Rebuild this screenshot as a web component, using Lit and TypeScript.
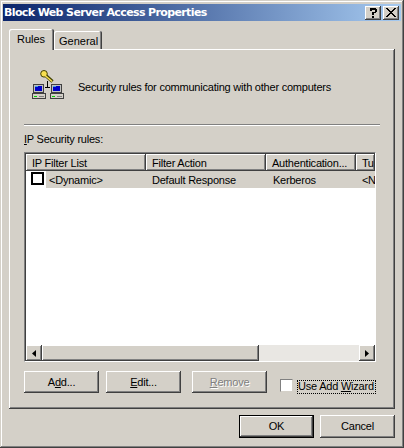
import { LitElement, html, svg, css } from "lit";
import { customElement } from "lit/decorators.js";

const pc = svg`
  <path d="M1 14h11v9H1z" fill="#404040"/><path d="M2 15h9v7H2z" fill="#c0c0c0"/><path d="M3 16h7v5H3z" fill="#0000c8"/><path d="M3 16h3v1H3z" fill="#40a0e0"/>
  <path d="M0 23h14v6H0z" fill="#404040"/><path d="M1 24h12v4H1z" fill="#d4d0c8"/><path d="M2 26h3v1H2z" fill="#00d000"/><path d="M7 26h5v1H7z" fill="#808080"/>
`;

@customElement("app-root")
export class AppRoot extends LitElement {
  static styles = css`
    :host { display: block; width: 404px; height: 448px; overflow: hidden; font: 11px/14px "Liberation Sans", Arial, sans-serif; letter-spacing: -0.22px; color: #000; }
    * { box-sizing: border-box; }
    u { text-decoration: underline; text-underline-offset: 1px; }
    .win { width: 404px; height: 448px; background: #d4d0c8; padding: 4px 3px 3px; box-shadow: inset -1px -1px #404040, inset 1px 1px #d4d0c8, inset -2px -2px #808080, inset 2px 2px #fff; display: flex; flex-direction: column; }
    .title { height: 17px; flex: none; display: flex; align-items: center; padding: 0 2px 0 1px; background: linear-gradient(90deg, #0a246a, #a6caf0); }
    .title b { flex: 1; color: #fff; font: bold 11px/17px "DejaVu Sans", sans-serif; letter-spacing: -0.62px; }
    .cap { width: 16px; height: 14px; display: flex; align-items: center; justify-content: center; padding: 0; }
    .cap + .cap { margin-left: 2px; }
    .bevel { background: #d4d0c8; box-shadow: inset -1px -1px #404040, inset 1px 1px #fff, inset -2px -2px #808080; }
    .body { flex: 1; padding: 8px 6px 0; display: flex; flex-direction: column; }
    .tabs { display: flex; height: 20px; align-items: flex-end; position: relative; z-index: 1; }
    .tab { height: 18px; width: 48px; padding: 3px 0 0 5px; background: #d4d0c8; border-radius: 2px 2px 0 0; box-shadow: inset -1px 0 #404040, inset 1px 1px #fff, inset -2px 0 #808080; letter-spacing: 0; }
    .tab.on { height: 21px; width: 45px; margin-bottom: -1px; padding: 3px 0 0 8px; }
    .panel { width: 386px; height: 360px; flex: none; padding: 21px 15px 0; background: #d4d0c8; box-shadow: inset -1px -1px #404040, inset 1px 1px #fff, inset -2px -2px #808080; display: flex; flex-direction: column; }
    .head { display: flex; align-items: center; height: 31px; padding-left: 8px; gap: 14px; flex: none; }
    .head svg { display: block; flex: none; }
    .head span { padding-top: 2px; }
    .sep { flex: none; width: 356px; height: 2px; margin-top: 23px; background: linear-gradient(#808080 50%, #fff 50%); }
    .lbl { margin-top: 6px; height: 14px; flex: none; }
    .list { flex: none; margin-top: 6px; width: 352px; height: 210px; display: flex; flex-direction: column; background: #fff; border: 1px solid; border-color: #808080 #fff #fff #808080; box-shadow: inset 1px 1px #404040; padding: 1px 0 0 1px; }
    .hdr { display: flex; height: 17px; flex: none; overflow: hidden; }
    .hc { flex: none; padding: 2px 0 0 6px; white-space: nowrap; overflow: hidden; }
    .c1 { width: 120px; } .c2 { width: 120px; } .c3 { width: 90px; } .c4 { min-width: 0; overflow: hidden; white-space: nowrap; }
    .row { display: flex; height: 17px; flex: none; overflow: hidden; }
    .first { display: flex; width: 120px; flex: none; }
    .ck { width: 13px; height: 13px; margin: 1px 2px 0 5px; flex: none; background: #fff; border: 2px solid #000; }
    .rc { background: #d4d0c8; padding: 2px 0 0 6px; flex: none; white-space: nowrap; }
    .rc.c3 { padding-left: 7px; }
    .first .rc { flex: 1; padding-left: 3px; }
    .hc.c4, .rc.c4 { flex: 1; padding-left: 6px; letter-spacing: -0.5px; }
    .fill { flex: 1; }
    .sb { display: flex; height: 16px; flex: none; }
    .sbtn { width: 16px; flex: none; display: flex; align-items: center; justify-content: center; }
    .thumb { width: 217px; flex: none; }
    .track { flex: 1; background: #e9e7e3; }
    .btns { display: flex; flex: none; margin-top: 9px; height: 22px; align-items: flex-start; }
    .btn { width: 75px; height: 22px; display: flex; align-items: center; justify-content: center; flex: none; }
    .dis { color: #808080; text-shadow: 1px 1px 0 #fff; }
    .e { margin-left: 7px; } .r { margin-left: 11px; }
    .cb { width: 13px; height: 13px; margin: 8px 4px 0 13px; flex: none; background: #fff; border: 1px solid; border-color: #808080 #d4d0c8 #d4d0c8 #808080; }
    .foc { margin-top: 9px; height: 14px; width: 79px; flex: none; outline: 1px dotted #000; outline-offset: -1px; padding-left: 1px; white-space: nowrap; line-height: 12px; }
    .foot { display: flex; justify-content: flex-end; gap: 6px; margin-top: 6px; flex: none; }
    .foot .btn { height: 23px; padding-bottom: 1px; }
    .def { box-shadow: inset 0 0 0 1px #000, inset -2px -2px #404040, inset 2px 2px #fff, inset -3px -3px #808080; }
  `;

  render() {
    return html`<div class="win">
      <div class="title">
        <b>Block Web Server Access Properties</b>
        <div class="cap bevel"><svg width="8" height="10" viewBox="0 0 8 10" shape-rendering="crispEdges"><path d="M1 0h6v1h1v3H7v1H5v2H3V4h3V2H3v1H1zM3 8h2v2H3z"/></svg></div>
        <div class="cap bevel"><svg width="10" height="9" viewBox="0 0 10 9" shape-rendering="crispEdges"><path d="M0 0h2v1h1v1h1v1h2V2h1V1h1V0h2v1H9v1H8v1H7v1H6v1h1v1h1v1h1v1h1v1H8V8H7V7H6V6H4v1H3v1H2v1H0V8h1V7h1V6h1V5h1V4H3V3H2V2H1V1H0z"/></svg></div>
      </div>
      <div class="body">
        <div class="tabs">
          <div class="tab on">Rules</div>
          <div class="tab">General</div>
        </div>
        <div class="panel">
          <div class="head">
            <svg width="32" height="31" viewBox="0 0 32 31" shape-rendering="crispEdges">
              <path d="M15.5 11v7M13 17.5h5" stroke="#000" fill="none"/>
              <g shape-rendering="auto">
                <path d="M12 4L20.5 11.5" stroke="#404000" stroke-width="3.4" fill="none"/>
                <circle cx="12" cy="3.8" r="3.3" fill="#f8e050" stroke="#404000"/>
                <path d="M12 4.5L20 11.5" stroke="#f8e050" stroke-width="1.6" fill="none"/>
              </g>
              ${pc}
              <g transform="translate(18 0)">${pc}</g>
            </svg>
            <span>Security rules for communicating with other computers</span>
          </div>
          <div class="sep"></div>
          <div class="lbl"><u>I</u>P Security rules:</div>
          <div class="list">
            <div class="hdr">
              <div class="hc bevel c1">IP Filter List</div>
              <div class="hc bevel c2">Filter Action</div>
              <div class="hc bevel c3">Authentication...</div>
              <div class="hc bevel c4">Tu</div>
            </div>
            <div class="row">
              <div class="first"><div class="ck"></div><div class="rc">&lt;Dynamic&gt;</div></div>
              <div class="rc c2">Default Response</div>
              <div class="rc c3">Kerberos</div>
              <div class="rc c4">&lt;N</div>
            </div>
            <div class="fill"></div>
            <div class="sb">
              <div class="sbtn bevel"><svg width="4" height="7" viewBox="0 0 4 7"><path d="M4 0v7L0 3.5z"/></svg></div>
              <div class="thumb bevel"></div>
              <div class="track"></div>
              <div class="sbtn bevel"><svg width="4" height="7" viewBox="0 0 4 7"><path d="M0 0v7l4-3.5z"/></svg></div>
            </div>
          </div>
          <div class="btns">
            <div class="btn bevel"><span>A<u>d</u>d...</span></div>
            <div class="btn bevel e"><span><u>E</u>dit...</span></div>
            <div class="btn bevel r dis"><span><u>R</u>emove</span></div>
            <div class="cb"></div>
            <div class="foc">Use Add <u>W</u>izard</div>
          </div>
        </div>
        <div class="foot">
          <div class="btn bevel def">OK</div>
          <div class="btn bevel">Cancel</div>
        </div>
      </div>
    </div>`;
  }
}
